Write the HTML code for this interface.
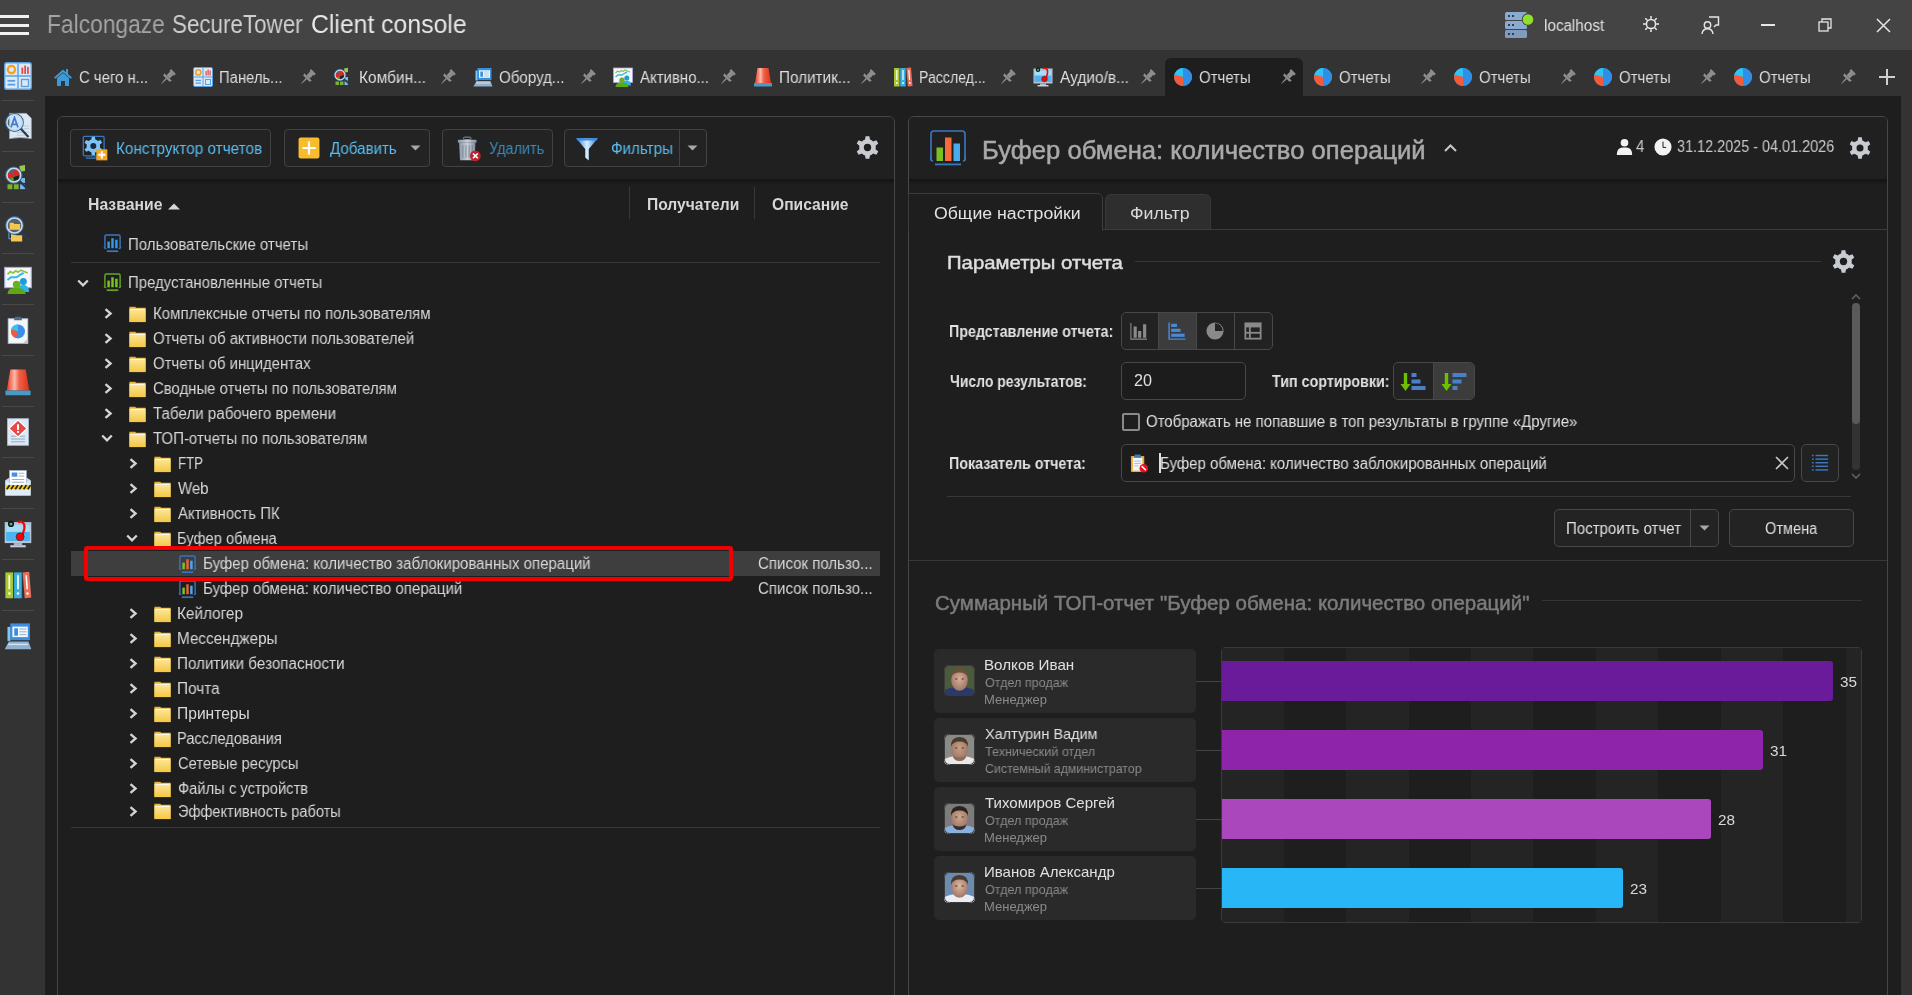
<!DOCTYPE html>
<html><head><meta charset="utf-8"><style>
html,body{margin:0;padding:0;}
body{width:1912px;height:995px;overflow:hidden;position:relative;background:#1e1e1e;font-family:"Liberation Sans",sans-serif;}
.a{position:absolute;}
.t{position:absolute;white-space:nowrap;line-height:1;will-change:transform;}
</style></head><body>
<div class="a" style="left:0px;top:0px;width:1912px;height:50px;background:#444444;"></div><div class="a" style="left:0px;top:50px;width:1912px;height:46px;background:#333333;"></div><div class="a" style="left:0px;top:96px;width:45px;height:899px;background:#333333;"></div><div class="a" style="left:1901px;top:96px;width:11px;height:899px;background:#333333;"></div><div class="a" style="left:45px;top:96px;width:1856px;height:899px;background:#1e1e1e;"></div><div class="a" style="left:0px;top:15px;width:29px;height:3px;background:#f2f2f2;"></div><div class="a" style="left:0px;top:24px;width:29px;height:3px;background:#f2f2f2;"></div><div class="a" style="left:0px;top:32px;width:29px;height:3px;background:#f2f2f2;"></div><div class="t" id="t_falcon" style="left:46.97px;top:12.44px;font-size:25px;color:#a4a4a4;transform:scaleX(0.9118);transform-origin:0 0;">Falcongaze</div><div class="t" id="t_secure" style="left:171.58px;top:12.44px;font-size:25px;color:#cfcfcf;transform:scaleX(0.8952);transform-origin:0 0;">SecureTower</div><div class="t" id="t_client" style="left:311.12px;top:12.44px;font-size:25px;color:#e8e8e8;transform:scaleX(0.9906);transform-origin:0 0;">Client console</div><svg class="a" style="left:1504px;top:11px;" width="32" height="28" viewBox="0 0 32 28">
<rect x="1" y="1" width="22" height="8" rx="1.5" fill="#8aaad0"/>
<rect x="1" y="10" width="22" height="8" rx="1.5" fill="#8aaad0"/>
<rect x="1" y="19" width="22" height="8" rx="1.5" fill="#7f9cc0"/>
<rect x="4" y="4" width="2" height="2" fill="#2d3e55"/><rect x="8" y="4" width="2" height="2" fill="#2d3e55"/>
<rect x="4" y="13" width="2" height="2" fill="#2d3e55"/><rect x="8" y="13" width="2" height="2" fill="#2d3e55"/>
<rect x="4" y="22" width="2" height="2" fill="#2d3e55"/><rect x="8" y="22" width="2" height="2" fill="#2d3e55"/>
<circle cx="24" cy="8.5" r="6.2" fill="#444"/><circle cx="24" cy="8.5" r="5.3" fill="#8ee02a"/>
</svg><div class="t" id="t_localhost" style="left:1543.78px;top:17.59px;font-size:15.6px;color:#e0e0e0;transform:scaleX(0.9770);transform-origin:0 0;">localhost</div><svg class="a" style="left:1642px;top:15px;" width="18" height="18" viewBox="0 0 18 18"><g fill="none" stroke="#ececec" stroke-width="1.5">
<circle cx="9" cy="9" r="4.6"/>
<path d="M9 1 V3.8 M9 14.2 V17 M1 9 H3.8 M14.2 9 H17 M3.3 3.3 L5.3 5.3 M12.7 12.7 L14.7 14.7 M3.3 14.7 L5.3 12.7 M12.7 5.3 L14.7 3.3"/></g></svg><svg class="a" style="left:1701px;top:16px;" width="19" height="19" viewBox="0 0 19 19"><g fill="none" stroke="#e6e6e6" stroke-width="1.4">
<path d="M8 1 H17.5 V9 H15 L13 11"/>
<circle cx="6.5" cy="9" r="3.2"/>
<path d="M1 18 C1.5 14 3.5 12.8 6.5 12.8 C9.5 12.8 11.5 14 12 18"/>
</g></svg><div class="a" style="left:1761px;top:24px;width:14px;height:1.5px;background:#e6e6e6;"></div><svg class="a" style="left:1818px;top:18px;" width="15.6" height="14" viewBox="0 0 15.6 14"><g fill="none" stroke="#e6e6e6" stroke-width="1.3"><rect x="1" y="4" width="9" height="9"/><path d="M4 4 V1 H13 V10 H10"/></g></svg><svg class="a" style="left:1876px;top:18px;" width="15" height="15" viewBox="0 0 15 15"><path d="M1 1 L14 14 M14 1 L1 14" stroke="#e6e6e6" stroke-width="1.5"/></svg><div class="a" style="left:1165px;top:58px;width:138px;height:38px;background:#1e1e1e;border-radius:6px 6px 0 0;"></div><svg class="a" style="left:53px;top:67px;" width="20" height="20" viewBox="0 0 20 20"><path d="M10 2.5 L1 10.5 L2.5 11.8 L10 5.2 L17.5 11.8 L19 10.5 L15 7 L15 2 L13 2 L13 5.2 Z" fill="#3d9ad6"/>
<path d="M4 11 L10 6 L16 11 L16 19 L12 19 L12 14 L8 14 L8 19 L4 19 Z" fill="#3d9ad6"/></svg><div class="t" style="left:79.19px;top:69.79px;font-size:15.6px;color:#dedede;transform:scaleX(0.9549);transform-origin:0 0;">С чего н...</div><svg class="a" style="left:159px;top:69px;" width="17" height="17" viewBox="0 0 20 20"><g transform="rotate(45 10 10)" fill="#8e8e8e">
<rect x="6" y="0" width="8" height="3" rx="0.8"/><rect x="7.3" y="2.5" width="5.4" height="6.5"/>
<path d="M3.8 9 H16.2 L15.2 12 H4.8 Z"/><path d="M9 12 H11 L10.3 20 H9.7 Z"/></g></svg><svg class="a" style="left:192.5px;top:67px;" width="20" height="20" viewBox="0 0 20 20"><rect x="0.5" y="0.5" width="19" height="19" rx="1.5" fill="#dbe9f8" stroke="#5aa0e0" stroke-width="1"/>
<path d="M10 1 V19 M1 10 H19" stroke="#5aa0e0" stroke-width="1"/>
<circle cx="5.3" cy="5.4" r="2.6" fill="none" stroke="#f5a020" stroke-width="1.6"/>
<rect x="12.5" y="4" width="1.2" height="4.5" fill="#e84040"/><rect x="14.5" y="2.5" width="1.2" height="6" fill="#e84040"/><rect x="16.5" y="3.5" width="1.2" height="5" fill="#e84040"/>
<rect x="2.5" y="12.8" width="5.5" height="1.3" fill="#5aa0e0"/><rect x="2.5" y="15.5" width="5.5" height="1.3" fill="#5aa0e0"/>
<rect x="12.5" y="12.5" width="5" height="5" fill="none" stroke="#5aa0e0" stroke-width="1"/></svg><div class="t" style="left:218.69px;top:69.79px;font-size:15.6px;color:#dedede;transform:scaleX(0.9486);transform-origin:0 0;">Панель...</div><svg class="a" style="left:299px;top:69px;" width="17" height="17" viewBox="0 0 20 20"><g transform="rotate(45 10 10)" fill="#8e8e8e">
<rect x="6" y="0" width="8" height="3" rx="0.8"/><rect x="7.3" y="2.5" width="5.4" height="6.5"/>
<path d="M3.8 9 H16.2 L15.2 12 H4.8 Z"/><path d="M9 12 H11 L10.3 20 H9.7 Z"/></g></svg><svg class="a" style="left:332.5px;top:67px;" width="20" height="20" viewBox="0 0 20 20"><rect x="2.5" y="14.5" width="3.5" height="3.5" fill="#7cb030"/><rect x="7" y="14.5" width="3.5" height="3.5" fill="#7cb030"/>
<path d="M11.5 14.5 H15 V18 H11.5 Z" fill="#78b8f0"/><rect x="11.5" y="10" width="3.5" height="3.5" fill="#78b8f0"/>
<path d="M11 1.5 L15 0.8 L15 5 L11.5 5.5 Z" fill="#98c850"/><circle cx="7" cy="8" r="5.8" fill="#b8d4ec" fill-opacity="0.3"/><path d="M2.5 7 L6 6 L6.5 9.5 L3 10.5 Z" fill="#e82020"/><path d="M7 5 L10 3.8 L10.8 7.5 L7.5 8.5 Z" fill="#e82020"/><path d="M6.5 9.5 L10.8 8 L11 11 L7 12 Z" fill="#202020"/><path d="M3 10.5 L6.5 9.5 L7 12 L4 12.5 Z" fill="#5a9a28"/>
<circle cx="7" cy="8" r="5.8" fill="none" stroke="#2a6aa0" stroke-width="0.8"/>
<circle cx="7" cy="8" r="4.8999999999999995" fill="none" stroke="#c8dcec" stroke-width="1.1"/>
<path d="M11.3 12.3 L17.5 18.5" stroke="#2a3a4a" stroke-width="1.6"/></svg><div class="t" style="left:358.62px;top:69.79px;font-size:15.6px;color:#dedede;transform:scaleX(0.9914);transform-origin:0 0;">Комбин...</div><svg class="a" style="left:439px;top:69px;" width="17" height="17" viewBox="0 0 20 20"><g transform="rotate(45 10 10)" fill="#8e8e8e">
<rect x="6" y="0" width="8" height="3" rx="0.8"/><rect x="7.3" y="2.5" width="5.4" height="6.5"/>
<path d="M3.8 9 H16.2 L15.2 12 H4.8 Z"/><path d="M9 12 H11 L10.3 20 H9.7 Z"/></g></svg><svg class="a" style="left:472.5px;top:67px;" width="20" height="20" viewBox="0 0 20 20"><rect x="4.5" y="1" width="14" height="12" fill="#3a8fe0"/><rect x="2.5" y="3.5" width="2" height="10" fill="#7ec8f8"/>
<rect x="6" y="3.3" width="11" height="7.5" fill="#f4f8fc"/><rect x="7.3" y="4.5" width="2.7" height="5.3" fill="#3a8fe0"/>
<rect x="11" y="4.6" width="5" height="0.8" fill="#9ab8cc"/><rect x="11" y="6.6" width="5" height="0.8" fill="#9ab8cc"/><rect x="11" y="8.6" width="5" height="0.8" fill="#9ab8cc"/>
<path d="M3.5 14 H17.5 L19.5 19.5 H0.5 Z" fill="#90b0d0"/><path d="M3 16 H17" stroke="#d8e4f0" stroke-width="1"/></svg><div class="t" style="left:499.22px;top:69.79px;font-size:15.6px;color:#dedede;transform:scaleX(0.9688);transform-origin:0 0;">Оборуд...</div><svg class="a" style="left:579px;top:69px;" width="17" height="17" viewBox="0 0 20 20"><g transform="rotate(45 10 10)" fill="#8e8e8e">
<rect x="6" y="0" width="8" height="3" rx="0.8"/><rect x="7.3" y="2.5" width="5.4" height="6.5"/>
<path d="M3.8 9 H16.2 L15.2 12 H4.8 Z"/><path d="M9 12 H11 L10.3 20 H9.7 Z"/></g></svg><svg class="a" style="left:612.5px;top:67px;" width="20" height="20" viewBox="0 0 20 20"><rect x="0.5" y="1" width="19" height="14.5" fill="#f6f6fc" stroke="#a8aad8" stroke-width="0.8"/>
<path d="M2.5 6 L4.5 4 L6.5 5 L8.5 3.5 L10 4.5 L12 3 L17 5" stroke="#8cc63f" stroke-width="1.2" fill="none"/>
<path d="M2.5 10 L5 8 L9 8 L12 6 L14 5" stroke="#39b8e8" stroke-width="1.4" fill="none"/>
<circle cx="13.8" cy="11" r="2.5" fill="#1a9ed8"/><path d="M9.5 18.5 C10 14.5 11.5 13.5 13.8 13.5 C16 13.5 17.5 14.5 18 18.5 Z" fill="#2ab4ec"/>
<circle cx="9" cy="13.2" r="2.7" fill="#68b020"/><path d="M2.5 20 C3 16 5.5 15.8 9 15.8 C12.5 15.8 14.5 16 15.5 20 Z" fill="#5ea818"/></svg><div class="t" style="left:639.66px;top:69.79px;font-size:15.6px;color:#dedede;transform:scaleX(0.9598);transform-origin:0 0;">Активно...</div><svg class="a" style="left:719px;top:69px;" width="17" height="17" viewBox="0 0 20 20"><g transform="rotate(45 10 10)" fill="#8e8e8e">
<rect x="6" y="0" width="8" height="3" rx="0.8"/><rect x="7.3" y="2.5" width="5.4" height="6.5"/>
<path d="M3.8 9 H16.2 L15.2 12 H4.8 Z"/><path d="M9 12 H11 L10.3 20 H9.7 Z"/></g></svg><svg class="a" style="left:752.5px;top:67px;" width="20" height="20" viewBox="0 0 20 20"><defs><linearGradient id="gal" x1="0" x2="1"><stop offset="0" stop-color="#e83a20"/><stop offset="0.35" stop-color="#ffb8a8"/><stop offset="0.55" stop-color="#f06048"/><stop offset="1" stop-color="#e03018"/></linearGradient></defs>
<path d="M4.5 1 H15.5 L18 16 H2 Z" fill="url(#gal)"/><rect x="1" y="16" width="18" height="3.5" rx="0.5" fill="#4a9ac8"/></svg><div class="t" style="left:778.65px;top:69.79px;font-size:15.6px;color:#dedede;transform:scaleX(0.9789);transform-origin:0 0;">Политик...</div><svg class="a" style="left:859px;top:69px;" width="17" height="17" viewBox="0 0 20 20"><g transform="rotate(45 10 10)" fill="#8e8e8e">
<rect x="6" y="0" width="8" height="3" rx="0.8"/><rect x="7.3" y="2.5" width="5.4" height="6.5"/>
<path d="M3.8 9 H16.2 L15.2 12 H4.8 Z"/><path d="M9 12 H11 L10.3 20 H9.7 Z"/></g></svg><svg class="a" style="left:892.5px;top:67px;" width="20" height="20" viewBox="0 0 20 20"><rect x="1" y="1" width="5.5" height="18.5" fill="#a8c830"/><rect x="7.2" y="1" width="5.5" height="18.5" fill="#39aee0"/>
<path d="M13.3 1 L18 0.5 L19.5 19 L14.8 19.5 Z" fill="#e8705a"/>
<rect x="3.2" y="3" width="1.2" height="10" fill="#fff"/><rect x="9.4" y="3" width="1.2" height="10" fill="#fff"/><path d="M15.3 3 L16.4 3 L17.1 13 L16 13 Z" fill="#fff"/>
<circle cx="3.8" cy="16" r="0.9" fill="#fff"/><circle cx="10" cy="16" r="0.9" fill="#fff"/><circle cx="16.8" cy="16" r="0.9" fill="#fff"/></svg><div class="t" style="left:918.73px;top:69.79px;font-size:15.6px;color:#dedede;transform:scaleX(0.9063);transform-origin:0 0;">Расслед...</div><svg class="a" style="left:999px;top:69px;" width="17" height="17" viewBox="0 0 20 20"><g transform="rotate(45 10 10)" fill="#8e8e8e">
<rect x="6" y="0" width="8" height="3" rx="0.8"/><rect x="7.3" y="2.5" width="5.4" height="6.5"/>
<path d="M3.8 9 H16.2 L15.2 12 H4.8 Z"/><path d="M9 12 H11 L10.3 20 H9.7 Z"/></g></svg><svg class="a" style="left:1032.5px;top:67px;" width="20" height="20" viewBox="0 0 20 20"><rect x="0.5" y="1.5" width="19" height="15" fill="#b8c4d4"/><rect x="1.5" y="3.5" width="17" height="11.5" fill="#4cb4ee"/>
<rect x="1.5" y="3.5" width="17" height="5" fill="#a8dcf8"/>
<rect x="7" y="16.5" width="6" height="1.5" fill="#b0b8cc"/><rect x="4.5" y="18" width="11" height="1.5" fill="#c8cce0"/>
<circle cx="5" cy="2.8" r="2.2" fill="#111"/><circle cx="5" cy="2.8" r="1.1" fill="#3cb878"/>
<path d="M10 1.5 C13 0.5 15 2 14.5 6 L13 12" stroke="#f00" stroke-width="1.6" fill="none"/>
<circle cx="11.5" cy="12" r="2.8" fill="#f00" stroke="#333" stroke-width="0.6"/></svg><div class="t" style="left:1059.66px;top:69.79px;font-size:15.6px;color:#dedede;transform:scaleX(0.9912);transform-origin:0 0;">Аудио/в...</div><svg class="a" style="left:1139px;top:69px;" width="17" height="17" viewBox="0 0 20 20"><g transform="rotate(45 10 10)" fill="#8e8e8e">
<rect x="6" y="0" width="8" height="3" rx="0.8"/><rect x="7.3" y="2.5" width="5.4" height="6.5"/>
<path d="M3.8 9 H16.2 L15.2 12 H4.8 Z"/><path d="M9 12 H11 L10.3 20 H9.7 Z"/></g></svg><svg class="a" style="left:1173px;top:67px;" width="20" height="20" viewBox="0 0 20 20"><circle cx="10" cy="10" r="9" fill="#36a4f0"/><path d="M10 10 L10 1 A9 9 0 0 0 1.3 7.8 Z" fill="#2ec4f6"/>
<path d="M10 10 L1.3 7.8 A9 9 0 0 0 10 19 Z" fill="#f25a3a"/>
<path d="M10 1 A9 9 0 0 1 10 19 Z" fill="#2f8fe6"/></svg><div class="t" style="left:1199.23px;top:69.79px;font-size:15.6px;color:#dedede;transform:scaleX(0.9583);transform-origin:0 0;">Отчеты</div><svg class="a" style="left:1279px;top:69px;" width="17" height="17" viewBox="0 0 20 20"><g transform="rotate(45 10 10)" fill="#8e8e8e">
<rect x="6" y="0" width="8" height="3" rx="0.8"/><rect x="7.3" y="2.5" width="5.4" height="6.5"/>
<path d="M3.8 9 H16.2 L15.2 12 H4.8 Z"/><path d="M9 12 H11 L10.3 20 H9.7 Z"/></g></svg><svg class="a" style="left:1313px;top:67px;" width="20" height="20" viewBox="0 0 20 20"><circle cx="10" cy="10" r="9" fill="#36a4f0"/><path d="M10 10 L10 1 A9 9 0 0 0 1.3 7.8 Z" fill="#2ec4f6"/>
<path d="M10 10 L1.3 7.8 A9 9 0 0 0 10 19 Z" fill="#f25a3a"/>
<path d="M10 1 A9 9 0 0 1 10 19 Z" fill="#2f8fe6"/></svg><div class="t" style="left:1339.23px;top:69.79px;font-size:15.6px;color:#dedede;transform:scaleX(0.9583);transform-origin:0 0;">Отчеты</div><svg class="a" style="left:1419px;top:69px;" width="17" height="17" viewBox="0 0 20 20"><g transform="rotate(45 10 10)" fill="#8e8e8e">
<rect x="6" y="0" width="8" height="3" rx="0.8"/><rect x="7.3" y="2.5" width="5.4" height="6.5"/>
<path d="M3.8 9 H16.2 L15.2 12 H4.8 Z"/><path d="M9 12 H11 L10.3 20 H9.7 Z"/></g></svg><svg class="a" style="left:1453px;top:67px;" width="20" height="20" viewBox="0 0 20 20"><circle cx="10" cy="10" r="9" fill="#36a4f0"/><path d="M10 10 L10 1 A9 9 0 0 0 1.3 7.8 Z" fill="#2ec4f6"/>
<path d="M10 10 L1.3 7.8 A9 9 0 0 0 10 19 Z" fill="#f25a3a"/>
<path d="M10 1 A9 9 0 0 1 10 19 Z" fill="#2f8fe6"/></svg><div class="t" style="left:1479.23px;top:69.79px;font-size:15.6px;color:#dedede;transform:scaleX(0.9583);transform-origin:0 0;">Отчеты</div><svg class="a" style="left:1559px;top:69px;" width="17" height="17" viewBox="0 0 20 20"><g transform="rotate(45 10 10)" fill="#8e8e8e">
<rect x="6" y="0" width="8" height="3" rx="0.8"/><rect x="7.3" y="2.5" width="5.4" height="6.5"/>
<path d="M3.8 9 H16.2 L15.2 12 H4.8 Z"/><path d="M9 12 H11 L10.3 20 H9.7 Z"/></g></svg><svg class="a" style="left:1593px;top:67px;" width="20" height="20" viewBox="0 0 20 20"><circle cx="10" cy="10" r="9" fill="#36a4f0"/><path d="M10 10 L10 1 A9 9 0 0 0 1.3 7.8 Z" fill="#2ec4f6"/>
<path d="M10 10 L1.3 7.8 A9 9 0 0 0 10 19 Z" fill="#f25a3a"/>
<path d="M10 1 A9 9 0 0 1 10 19 Z" fill="#2f8fe6"/></svg><div class="t" style="left:1619.23px;top:69.79px;font-size:15.6px;color:#dedede;transform:scaleX(0.9583);transform-origin:0 0;">Отчеты</div><svg class="a" style="left:1699px;top:69px;" width="17" height="17" viewBox="0 0 20 20"><g transform="rotate(45 10 10)" fill="#8e8e8e">
<rect x="6" y="0" width="8" height="3" rx="0.8"/><rect x="7.3" y="2.5" width="5.4" height="6.5"/>
<path d="M3.8 9 H16.2 L15.2 12 H4.8 Z"/><path d="M9 12 H11 L10.3 20 H9.7 Z"/></g></svg><svg class="a" style="left:1733px;top:67px;" width="20" height="20" viewBox="0 0 20 20"><circle cx="10" cy="10" r="9" fill="#36a4f0"/><path d="M10 10 L10 1 A9 9 0 0 0 1.3 7.8 Z" fill="#2ec4f6"/>
<path d="M10 10 L1.3 7.8 A9 9 0 0 0 10 19 Z" fill="#f25a3a"/>
<path d="M10 1 A9 9 0 0 1 10 19 Z" fill="#2f8fe6"/></svg><div class="t" style="left:1759.23px;top:69.79px;font-size:15.6px;color:#dedede;transform:scaleX(0.9583);transform-origin:0 0;">Отчеты</div><svg class="a" style="left:1839px;top:69px;" width="17" height="17" viewBox="0 0 20 20"><g transform="rotate(45 10 10)" fill="#8e8e8e">
<rect x="6" y="0" width="8" height="3" rx="0.8"/><rect x="7.3" y="2.5" width="5.4" height="6.5"/>
<path d="M3.8 9 H16.2 L15.2 12 H4.8 Z"/><path d="M9 12 H11 L10.3 20 H9.7 Z"/></g></svg><div class="a" style="left:1879px;top:76px;width:16px;height:2px;background:#cfcfcf;"></div><div class="a" style="left:1886px;top:69px;width:2px;height:16px;background:#cfcfcf;"></div><div class="a" style="left:2px;top:100px;width:32px;height:1px;background:#484848;"></div><div class="a" style="left:2px;top:151px;width:32px;height:1px;background:#484848;"></div><div class="a" style="left:2px;top:202px;width:32px;height:1px;background:#484848;"></div><div class="a" style="left:2px;top:253px;width:32px;height:1px;background:#484848;"></div><div class="a" style="left:2px;top:304px;width:32px;height:1px;background:#484848;"></div><div class="a" style="left:2px;top:355px;width:32px;height:1px;background:#484848;"></div><div class="a" style="left:2px;top:406px;width:32px;height:1px;background:#484848;"></div><div class="a" style="left:2px;top:457px;width:32px;height:1px;background:#484848;"></div><div class="a" style="left:2px;top:508px;width:32px;height:1px;background:#484848;"></div><div class="a" style="left:2px;top:559px;width:32px;height:1px;background:#484848;"></div><div class="a" style="left:2px;top:610px;width:32px;height:1px;background:#484848;"></div><svg class="a" style="left:4px;top:62px;" width="28" height="28" viewBox="0 0 20 20"><rect x="0.5" y="0.5" width="19" height="19" rx="1.5" fill="#dbe9f8" stroke="#5aa0e0" stroke-width="1"/>
<path d="M10 1 V19 M1 10 H19" stroke="#5aa0e0" stroke-width="1"/>
<circle cx="5.3" cy="5.4" r="2.6" fill="none" stroke="#f5a020" stroke-width="1.6"/>
<rect x="12.5" y="4" width="1.2" height="4.5" fill="#e84040"/><rect x="14.5" y="2.5" width="1.2" height="6" fill="#e84040"/><rect x="16.5" y="3.5" width="1.2" height="5" fill="#e84040"/>
<rect x="2.5" y="12.8" width="5.5" height="1.3" fill="#5aa0e0"/><rect x="2.5" y="15.5" width="5.5" height="1.3" fill="#5aa0e0"/>
<rect x="12.5" y="12.5" width="5" height="5" fill="none" stroke="#5aa0e0" stroke-width="1"/></svg><svg class="a" style="left:4px;top:112px;" width="28" height="28" viewBox="0 0 20 20"><path d="M4 1 H16 L19.5 4.5 V19 Q11.5 17.5 4 19 Z" fill="#dde8f2" stroke="#a8bccc" stroke-width="0.5"/>
<path d="M13 10 H18 M13 12 H18 M9 14.5 H18 M9 16.5 H17" stroke="#b8c8d8" stroke-width="0.7"/><circle cx="7.5" cy="7.5" r="6.3" fill="#b8d4ec" fill-opacity="0.3"/><path d="M5 11 L7.5 4 L10 11 M6 8.8 H9" stroke="#3a80d8" stroke-width="1.2" fill="none"/>
<circle cx="7.5" cy="7.5" r="6.3" fill="none" stroke="#2a6aa0" stroke-width="0.8"/>
<circle cx="7.5" cy="7.5" r="5.3999999999999995" fill="none" stroke="#c8dcec" stroke-width="1.1"/>
<path d="M12 12 L17.5 17.8" stroke="#2a3a4a" stroke-width="1.6"/></svg><svg class="a" style="left:4px;top:164px;" width="28" height="28" viewBox="0 0 20 20"><rect x="2.5" y="14.5" width="3.5" height="3.5" fill="#7cb030"/><rect x="7" y="14.5" width="3.5" height="3.5" fill="#7cb030"/>
<path d="M11.5 14.5 H15 V18 H11.5 Z" fill="#78b8f0"/><rect x="11.5" y="10" width="3.5" height="3.5" fill="#78b8f0"/>
<path d="M11 1.5 L15 0.8 L15 5 L11.5 5.5 Z" fill="#98c850"/><circle cx="7" cy="8" r="5.8" fill="#b8d4ec" fill-opacity="0.3"/><path d="M2.5 7 L6 6 L6.5 9.5 L3 10.5 Z" fill="#e82020"/><path d="M7 5 L10 3.8 L10.8 7.5 L7.5 8.5 Z" fill="#e82020"/><path d="M6.5 9.5 L10.8 8 L11 11 L7 12 Z" fill="#202020"/><path d="M3 10.5 L6.5 9.5 L7 12 L4 12.5 Z" fill="#5a9a28"/>
<circle cx="7" cy="8" r="5.8" fill="none" stroke="#2a6aa0" stroke-width="0.8"/>
<circle cx="7" cy="8" r="4.8999999999999995" fill="none" stroke="#c8dcec" stroke-width="1.1"/>
<path d="M11.3 12.3 L17.5 18.5" stroke="#2a3a4a" stroke-width="1.6"/></svg><svg class="a" style="left:4px;top:215px;" width="28" height="28" viewBox="0 0 20 20"><path d="M3.5 10 V17 H8" fill="none" stroke="#6aa8e0" stroke-width="0.7"/>
<path d="M5 13.5 H7.5 L8.5 14.5 H13 V19 H5 Z" fill="#f2c850"/><circle cx="7.5" cy="7.5" r="6.3" fill="#b8d4ec" fill-opacity="0.3"/><path d="M4 5.5 H6.5 L7.5 6.5 H11.5 V10.5 H4 Z" fill="#f2c850"/>
<circle cx="7.5" cy="7.5" r="6.3" fill="none" stroke="#2a6aa0" stroke-width="0.8"/>
<circle cx="7.5" cy="7.5" r="5.3999999999999995" fill="none" stroke="#c8dcec" stroke-width="1.1"/>
<path d="M12 12 L18 18.3" stroke="#2a3a4a" stroke-width="1.6"/></svg><svg class="a" style="left:4px;top:266px;" width="28" height="28" viewBox="0 0 20 20"><rect x="0.5" y="1" width="19" height="14.5" fill="#f6f6fc" stroke="#a8aad8" stroke-width="0.8"/>
<path d="M2.5 6 L4.5 4 L6.5 5 L8.5 3.5 L10 4.5 L12 3 L17 5" stroke="#8cc63f" stroke-width="1.2" fill="none"/>
<path d="M2.5 10 L5 8 L9 8 L12 6 L14 5" stroke="#39b8e8" stroke-width="1.4" fill="none"/>
<circle cx="13.8" cy="11" r="2.5" fill="#1a9ed8"/><path d="M9.5 18.5 C10 14.5 11.5 13.5 13.8 13.5 C16 13.5 17.5 14.5 18 18.5 Z" fill="#2ab4ec"/>
<circle cx="9" cy="13.2" r="2.7" fill="#68b020"/><path d="M2.5 20 C3 16 5.5 15.8 9 15.8 C12.5 15.8 14.5 16 15.5 20 Z" fill="#5ea818"/></svg><svg class="a" style="left:4px;top:316px;" width="28" height="28" viewBox="0 0 20 20"><rect x="3" y="2" width="14" height="17.5" fill="#f4f6fa" stroke="#b8c8d8" stroke-width="0.6"/>
<path d="M8 0.5 H12 L13 3 H7 Z" fill="#4a6a88"/><path d="M13.5 19.5 L17 16 V19.5 Z" fill="#c0c8d0"/>
<circle cx="10" cy="11" r="5" fill="#3a90e8"/><path d="M10 11 L10 6 A5 5 0 0 0 5.2 9.6 Z" fill="#3ac0f0"/><path d="M10 11 L5.2 9.6 A5 5 0 0 0 8.5 15.8 Z" fill="#f05a3a"/></svg><svg class="a" style="left:4px;top:368px;" width="28" height="28" viewBox="0 0 20 20"><defs><linearGradient id="gal" x1="0" x2="1"><stop offset="0" stop-color="#e83a20"/><stop offset="0.35" stop-color="#ffb8a8"/><stop offset="0.55" stop-color="#f06048"/><stop offset="1" stop-color="#e03018"/></linearGradient></defs>
<path d="M4.5 1 H15.5 L18 16 H2 Z" fill="url(#gal)"/><rect x="1" y="16" width="18" height="3.5" rx="0.5" fill="#4a9ac8"/></svg><svg class="a" style="left:4px;top:418px;" width="28" height="28" viewBox="0 0 20 20"><rect x="2.5" y="0.5" width="15" height="19" fill="#dce8f4" stroke="#a8bcd0" stroke-width="0.6"/>
<path d="M5 13 H15 M5 15 H15 M5 17 H15" stroke="#90a8c0" stroke-width="0.7"/>
<path d="M10 1.5 L16.5 7.5 L10 13.5 L3.5 7.5 Z" fill="#e84848" stroke="#fff" stroke-width="0.8"/>
<rect x="9.3" y="4.5" width="1.4" height="4" fill="#fff"/><rect x="9.3" y="9.3" width="1.4" height="1.4" fill="#fff"/></svg><svg class="a" style="left:4px;top:469px;" width="28" height="28" viewBox="0 0 20 20"><path d="M1 8 L10 2 L19 8 V19 H1 Z" fill="#c8dcf0"/>
<rect x="4" y="1" width="12" height="11" fill="#fff" stroke="#9ab0c8" stroke-width="0.5"/>
<rect x="5.5" y="2.5" width="4" height="3" fill="#4a8ee0"/><path d="M10.5 3 H14.5 M10.5 5 H14.5 M5.5 7.5 H14.5 M5.5 9.5 H14.5" stroke="#9ab0c8" stroke-width="0.8"/>
<path d="M1 8 L10 14 L19 8 V19 H1 Z" fill="#e0ecf8"/>
<rect x="1" y="11.5" width="18" height="3" fill="#f2c814"/>
<path d="M2 14.5 L4 11.5 M5 14.5 L7 11.5 M8 14.5 L10 11.5 M11 14.5 L13 11.5 M14 14.5 L16 11.5 M17 14.5 L19 11.5" stroke="#222" stroke-width="1.2"/></svg><svg class="a" style="left:4px;top:520px;" width="28" height="28" viewBox="0 0 20 20"><rect x="0.5" y="1.5" width="19" height="15" fill="#b8c4d4"/><rect x="1.5" y="3.5" width="17" height="11.5" fill="#4cb4ee"/>
<rect x="1.5" y="3.5" width="17" height="5" fill="#a8dcf8"/>
<rect x="7" y="16.5" width="6" height="1.5" fill="#b0b8cc"/><rect x="4.5" y="18" width="11" height="1.5" fill="#c8cce0"/>
<circle cx="5" cy="2.8" r="2.2" fill="#111"/><circle cx="5" cy="2.8" r="1.1" fill="#3cb878"/>
<path d="M10 1.5 C13 0.5 15 2 14.5 6 L13 12" stroke="#f00" stroke-width="1.6" fill="none"/>
<circle cx="11.5" cy="12" r="2.8" fill="#f00" stroke="#333" stroke-width="0.6"/></svg><svg class="a" style="left:4px;top:571px;" width="28" height="28" viewBox="0 0 20 20"><rect x="1" y="1" width="5.5" height="18.5" fill="#a8c830"/><rect x="7.2" y="1" width="5.5" height="18.5" fill="#39aee0"/>
<path d="M13.3 1 L18 0.5 L19.5 19 L14.8 19.5 Z" fill="#e8705a"/>
<rect x="3.2" y="3" width="1.2" height="10" fill="#fff"/><rect x="9.4" y="3" width="1.2" height="10" fill="#fff"/><path d="M15.3 3 L16.4 3 L17.1 13 L16 13 Z" fill="#fff"/>
<circle cx="3.8" cy="16" r="0.9" fill="#fff"/><circle cx="10" cy="16" r="0.9" fill="#fff"/><circle cx="16.8" cy="16" r="0.9" fill="#fff"/></svg><svg class="a" style="left:4px;top:622px;" width="28" height="28" viewBox="0 0 20 20"><rect x="4.5" y="1" width="14" height="12" fill="#3a8fe0"/><rect x="2.5" y="3.5" width="2" height="10" fill="#7ec8f8"/>
<rect x="6" y="3.3" width="11" height="7.5" fill="#f4f8fc"/><rect x="7.3" y="4.5" width="2.7" height="5.3" fill="#3a8fe0"/>
<rect x="11" y="4.6" width="5" height="0.8" fill="#9ab8cc"/><rect x="11" y="6.6" width="5" height="0.8" fill="#9ab8cc"/><rect x="11" y="8.6" width="5" height="0.8" fill="#9ab8cc"/>
<path d="M3.5 14 H17.5 L19.5 19.5 H0.5 Z" fill="#90b0d0"/><path d="M3 16 H17" stroke="#d8e4f0" stroke-width="1"/></svg><div class="a" style="left:57px;top:116px;width:838px;height:894px;background:#1e1e1e;border:1px solid #474747;box-sizing:border-box;border-radius:6px;"></div><div class="a" style="left:58px;top:117px;width:836px;height:62px;background:#202020;border-radius:5px 5px 0 0;"></div><div class="a" style="left:58px;top:179px;width:836px;height:6px;background:linear-gradient(#131313,rgba(30,30,30,0));"></div><div class="a" style="left:70px;top:129px;width:201px;height:38px;background:#232323;border:1px solid #424242;box-sizing:border-box;border-radius:4px;"></div><div class="a" style="left:284px;top:129px;width:146px;height:38px;background:#232323;border:1px solid #424242;box-sizing:border-box;border-radius:4px;"></div><div class="a" style="left:442px;top:129px;width:111px;height:38px;background:#232323;border:1px solid #424242;box-sizing:border-box;border-radius:4px;"></div><div class="a" style="left:564px;top:129px;width:143px;height:38px;background:#232323;border:1px solid #424242;box-sizing:border-box;border-radius:4px;"></div><div class="a" style="left:679px;top:130px;width:1px;height:36px;background:#424242;"></div><svg class="a" style="left:81px;top:135px;" width="28" height="26" viewBox="0 0 20 20"><rect x="1" y="1" width="16" height="15" rx="1" fill="none" stroke="#3a78c0" stroke-width="1"/>
<rect x="3" y="17.3" width="10" height="1" fill="#3a78c0"/><g transform="translate(1.5 1.2) scale(0.72)"><polygon points="7.87,3.12 8.36,0.14 11.64,0.14 12.13,3.12 13.60,3.76 14.89,4.72 17.72,3.65 19.36,6.49 17.02,8.40 17.20,10.00 17.02,11.60 19.36,13.51 17.72,16.35 14.89,15.28 13.60,16.24 12.13,16.88 11.64,19.86 8.36,19.86 7.87,16.88 6.40,16.24 5.11,15.28 2.28,16.35 0.64,13.51 2.98,11.60 2.80,10.00 2.98,8.40 0.64,6.49 2.28,3.65 5.11,4.72 6.40,3.76" fill="#7cc4f8"/><circle cx="10" cy="10" r="3.2" fill="#1e2a3a"/></g>
<rect x="11" y="11" width="8.5" height="8.5" fill="#f5a623"/><path d="M15.25 12.5 V18 M12.5 15.25 H18" stroke="#fff" stroke-width="1.6"/></svg><div class="t" style="left:115.63px;top:141.19px;font-size:15.6px;color:#58bdf0;transform:scaleX(0.9811);transform-origin:0 0;">Конструктор отчетов</div><svg class="a" style="left:298px;top:137px;" width="22" height="22" viewBox="0 0 20 20"><rect x="0.5" y="0.5" width="19" height="19" rx="2" fill="#f8bc2c"/><path d="M10 4 V16 M4 10 H16" stroke="#fff" stroke-width="2"/></svg><div class="t" style="left:330.45px;top:141.19px;font-size:15.6px;color:#58bdf0;transform:scaleX(0.9677);transform-origin:0 0;">Добавить</div><svg class="a" style="left:410px;top:145px;" width="11" height="6" viewBox="0 0 11 6"><path d="M0.5 0.5 H10.5 L5.5 5.5 Z" fill="#a8a8a8"/></svg><svg class="a" style="left:456px;top:136px;" width="25" height="26" viewBox="0 0 20 20"><defs><linearGradient id="gtr" x1="0" x2="1"><stop offset="0" stop-color="#8a98a8"/><stop offset="0.5" stop-color="#c8d0d8"/><stop offset="1" stop-color="#8090a0"/></linearGradient></defs>
<rect x="6" y="0.5" width="6" height="2" rx="0.8" fill="none" stroke="#7890a8" stroke-width="0.8"/>
<rect x="1.5" y="2.5" width="15" height="2.5" rx="0.8" fill="url(#gtr)"/><path d="M2.5 5 H15.5 L14.8 19 H3.2 Z" fill="url(#gtr)"/>
<path d="M5.5 7 V17 M8 7 V17 M10.5 7 V17 M13 7 V17" stroke="#6a7888" stroke-width="0.6"/>
<circle cx="15.5" cy="15.5" r="4.3" fill="#c0202a"/><path d="M13.6 13.6 L17.4 17.4 M17.4 13.6 L13.6 17.4" stroke="#fff" stroke-width="1.4"/></svg><div class="t" style="left:488.61px;top:141.19px;font-size:15.6px;color:#3a8ab8;transform:scaleX(0.9266);transform-origin:0 0;">Удалить</div><svg class="a" style="left:575px;top:136px;" width="24" height="26" viewBox="0 0 20 20"><defs><linearGradient id="gfu" x1="0" x2="1"><stop offset="0" stop-color="#2a7ad8"/><stop offset="0.5" stop-color="#d8f0ff"/><stop offset="1" stop-color="#2a7ad8"/></linearGradient></defs>
<path d="M1 1 H19 L11.5 10 V19.5 L8.5 17 V10 Z" fill="url(#gfu)"/><path d="M1 1 H19 L18 3 H2 Z" fill="#3a8ae8"/></svg><div class="t" style="left:610.84px;top:141.19px;font-size:15.6px;color:#58bdf0;transform:scaleX(0.9731);transform-origin:0 0;">Фильтры</div><svg class="a" style="left:687px;top:145px;" width="11" height="6" viewBox="0 0 11 6"><path d="M0.5 0.5 H10.5 L5.5 5.5 Z" fill="#a8a8a8"/></svg><svg class="a" style="left:856px;top:136px;" width="23" height="23" viewBox="0 0 20 20"><polygon points="7.87,3.12 8.36,0.14 11.64,0.14 12.13,3.12 13.60,3.76 14.89,4.72 17.72,3.65 19.36,6.49 17.02,8.40 17.20,10.00 17.02,11.60 19.36,13.51 17.72,16.35 14.89,15.28 13.60,16.24 12.13,16.88 11.64,19.86 8.36,19.86 7.87,16.88 6.40,16.24 5.11,15.28 2.28,16.35 0.64,13.51 2.98,11.60 2.80,10.00 2.98,8.40 0.64,6.49 2.28,3.65 5.11,4.72 6.40,3.76" fill="#c8ccd2"/><circle cx="10" cy="10" r="3.2" fill="#1e1e1e"/></svg><div class="t" style="left:87.77px;top:196.89px;font-size:15.6px;color:#d6d6d6;font-weight:700;transform:scaleX(1.0112);transform-origin:0 0;">Название</div><svg class="a" style="left:168px;top:203px;" width="12" height="7" viewBox="0 0 12 7"><path d="M0 6.5 L6 0.5 L12 6.5 Z" fill="#d6d6d6"/></svg><div class="a" style="left:629px;top:187px;width:1px;height:32px;background:#383838;"></div><div class="a" style="left:754px;top:187px;width:1px;height:32px;background:#383838;"></div><div class="t" style="left:647.18px;top:196.99px;font-size:15.6px;color:#d6d6d6;font-weight:700;transform:scaleX(0.9967);transform-origin:0 0;">Получатели</div><div class="t" style="left:772.27px;top:196.99px;font-size:15.6px;color:#d6d6d6;font-weight:700;transform:scaleX(1.0007);transform-origin:0 0;">Описание</div><svg class="a" style="left:102.5px;top:234px;" width="19" height="19" viewBox="0 0 20 20"><path d="M2 14.5 V2.5 Q2 1 3.5 1 H16.5 Q18 1 18 2.5 V14.5" fill="none" stroke="#3a78c0" stroke-width="1.5"/>
<path d="M1.2 13.5 Q1.5 15.5 3.5 15.5 M18.8 13.5 Q18.5 15.5 16.5 15.5" fill="none" stroke="#3a78c0" stroke-width="1.3"/>
<rect x="4" y="17.2" width="12" height="1.8" fill="#3a78c0"/>
<rect x="4.6" y="8" width="2.6" height="7" fill="#2f9af0"/><rect x="8.7" y="4.5" width="2.6" height="10.5" fill="#2f9af0"/><rect x="12.8" y="6" width="2.6" height="9" fill="#2f9af0"/></svg><div class="t" style="left:127.98px;top:236.69px;font-size:15.6px;color:#d8d8d8;transform:scaleX(0.9597);transform-origin:0 0;">Пользовательские отчеты</div><div class="a" style="left:71px;top:262px;width:809px;height:1px;background:#383838;"></div><svg class="a" style="left:77px;top:278.5px;" width="12" height="9" viewBox="0 0 12 9"><path d="M1.2 1.5 L6 6.3 L10.8 1.5" fill="none" stroke="#d4d4d4" stroke-width="2.3"/></svg><svg class="a" style="left:102.5px;top:273px;" width="19" height="19" viewBox="0 0 20 20"><path d="M2 14.5 V2.5 Q2 1 3.5 1 H16.5 Q18 1 18 2.5 V14.5" fill="none" stroke="#62a820" stroke-width="1.5"/>
<path d="M1.2 13.5 Q1.5 15.5 3.5 15.5 M18.8 13.5 Q18.5 15.5 16.5 15.5" fill="none" stroke="#62a820" stroke-width="1.3"/>
<rect x="4" y="17.2" width="12" height="1.8" fill="#62a820"/>
<rect x="4.6" y="8" width="2.6" height="7" fill="#7cc420"/><rect x="8.7" y="4.5" width="2.6" height="10.5" fill="#7cc420"/><rect x="12.8" y="6" width="2.6" height="9" fill="#7cc420"/></svg><div class="t" style="left:127.98px;top:275.49px;font-size:15.6px;color:#d8d8d8;transform:scaleX(0.9571);transform-origin:0 0;">Предустановленные отчеты</div><div class="a" style="left:71px;top:551px;width:809px;height:25px;background:#3e3e3e;"></div><svg class="a" style="left:104.1px;top:308.0px;" width="9" height="11" viewBox="0 0 9 11"><path d="M1.5 1.2 L6.6 5.5 L1.5 9.8" fill="none" stroke="#d4d4d4" stroke-width="2.3"/></svg><svg class="a" style="left:127.5px;top:304.5px;" width="19" height="18" viewBox="0 0 20 20"><defs><linearGradient id="gfo" x1="0" y1="0" x2="0" y2="1"><stop offset="0" stop-color="#fbe7a0"/><stop offset="1" stop-color="#f5c842"/></linearGradient></defs>
<path d="M1 2 H7.5 L8.5 3 H19 V19 H1 Z" fill="#e8b030"/><rect x="1" y="4" width="18" height="15" fill="url(#gfo)"/><rect x="2.5" y="4.6" width="15" height="0.8" fill="#fff"/></svg><div class="t" style="left:152.56px;top:305.79px;font-size:15.6px;color:#d8d8d8;transform:scaleX(0.9648);transform-origin:0 0;">Комплексные отчеты по пользователям</div><svg class="a" style="left:104.1px;top:333.0px;" width="9" height="11" viewBox="0 0 9 11"><path d="M1.5 1.2 L6.6 5.5 L1.5 9.8" fill="none" stroke="#d4d4d4" stroke-width="2.3"/></svg><svg class="a" style="left:127.5px;top:329.5px;" width="19" height="18" viewBox="0 0 20 20"><defs><linearGradient id="gfo" x1="0" y1="0" x2="0" y2="1"><stop offset="0" stop-color="#fbe7a0"/><stop offset="1" stop-color="#f5c842"/></linearGradient></defs>
<path d="M1 2 H7.5 L8.5 3 H19 V19 H1 Z" fill="#e8b030"/><rect x="1" y="4" width="18" height="15" fill="url(#gfo)"/><rect x="2.5" y="4.6" width="15" height="0.8" fill="#fff"/></svg><div class="t" style="left:153.13px;top:330.79px;font-size:15.6px;color:#d8d8d8;transform:scaleX(0.9569);transform-origin:0 0;">Отчеты об активности пользователей</div><svg class="a" style="left:104.1px;top:358.0px;" width="9" height="11" viewBox="0 0 9 11"><path d="M1.5 1.2 L6.6 5.5 L1.5 9.8" fill="none" stroke="#d4d4d4" stroke-width="2.3"/></svg><svg class="a" style="left:127.5px;top:354.5px;" width="19" height="18" viewBox="0 0 20 20"><defs><linearGradient id="gfo" x1="0" y1="0" x2="0" y2="1"><stop offset="0" stop-color="#fbe7a0"/><stop offset="1" stop-color="#f5c842"/></linearGradient></defs>
<path d="M1 2 H7.5 L8.5 3 H19 V19 H1 Z" fill="#e8b030"/><rect x="1" y="4" width="18" height="15" fill="url(#gfo)"/><rect x="2.5" y="4.6" width="15" height="0.8" fill="#fff"/></svg><div class="t" style="left:153.13px;top:355.79px;font-size:15.6px;color:#d8d8d8;transform:scaleX(0.9549);transform-origin:0 0;">Отчеты об инцидентах</div><svg class="a" style="left:104.1px;top:383.0px;" width="9" height="11" viewBox="0 0 9 11"><path d="M1.5 1.2 L6.6 5.5 L1.5 9.8" fill="none" stroke="#d4d4d4" stroke-width="2.3"/></svg><svg class="a" style="left:127.5px;top:379.5px;" width="19" height="18" viewBox="0 0 20 20"><defs><linearGradient id="gfo" x1="0" y1="0" x2="0" y2="1"><stop offset="0" stop-color="#fbe7a0"/><stop offset="1" stop-color="#f5c842"/></linearGradient></defs>
<path d="M1 2 H7.5 L8.5 3 H19 V19 H1 Z" fill="#e8b030"/><rect x="1" y="4" width="18" height="15" fill="url(#gfo)"/><rect x="2.5" y="4.6" width="15" height="0.8" fill="#fff"/></svg><div class="t" style="left:153.09px;top:380.79px;font-size:15.6px;color:#d8d8d8;transform:scaleX(0.9567);transform-origin:0 0;">Сводные отчеты по пользователям</div><svg class="a" style="left:104.1px;top:408.0px;" width="9" height="11" viewBox="0 0 9 11"><path d="M1.5 1.2 L6.6 5.5 L1.5 9.8" fill="none" stroke="#d4d4d4" stroke-width="2.3"/></svg><svg class="a" style="left:127.5px;top:404.5px;" width="19" height="18" viewBox="0 0 20 20"><defs><linearGradient id="gfo" x1="0" y1="0" x2="0" y2="1"><stop offset="0" stop-color="#fbe7a0"/><stop offset="1" stop-color="#f5c842"/></linearGradient></defs>
<path d="M1 2 H7.5 L8.5 3 H19 V19 H1 Z" fill="#e8b030"/><rect x="1" y="4" width="18" height="15" fill="url(#gfo)"/><rect x="2.5" y="4.6" width="15" height="0.8" fill="#fff"/></svg><div class="t" style="left:153.48px;top:405.79px;font-size:15.6px;color:#d8d8d8;transform:scaleX(0.9701);transform-origin:0 0;">Табели рабочего времени</div><svg class="a" style="left:101.1px;top:434.0px;" width="12" height="9" viewBox="0 0 12 9"><path d="M1.2 1.5 L6 6.3 L10.8 1.5" fill="none" stroke="#d4d4d4" stroke-width="2.3"/></svg><svg class="a" style="left:127.5px;top:429.5px;" width="19" height="18" viewBox="0 0 20 20"><defs><linearGradient id="gfo" x1="0" y1="0" x2="0" y2="1"><stop offset="0" stop-color="#fbe7a0"/><stop offset="1" stop-color="#f5c842"/></linearGradient></defs>
<path d="M1 2 H7.5 L8.5 3 H19 V19 H1 Z" fill="#e8b030"/><rect x="1" y="4" width="18" height="15" fill="url(#gfo)"/><rect x="2.5" y="4.6" width="15" height="0.8" fill="#fff"/></svg><div class="t" style="left:153.48px;top:430.79px;font-size:15.6px;color:#d8d8d8;transform:scaleX(0.9620);transform-origin:0 0;">ТОП-отчеты по пользователям</div><svg class="a" style="left:129.1px;top:458.0px;" width="9" height="11" viewBox="0 0 9 11"><path d="M1.5 1.2 L6.6 5.5 L1.5 9.8" fill="none" stroke="#d4d4d4" stroke-width="2.3"/></svg><svg class="a" style="left:152.5px;top:454.5px;" width="19" height="18" viewBox="0 0 20 20"><defs><linearGradient id="gfo" x1="0" y1="0" x2="0" y2="1"><stop offset="0" stop-color="#fbe7a0"/><stop offset="1" stop-color="#f5c842"/></linearGradient></defs>
<path d="M1 2 H7.5 L8.5 3 H19 V19 H1 Z" fill="#e8b030"/><rect x="1" y="4" width="18" height="15" fill="url(#gfo)"/><rect x="2.5" y="4.6" width="15" height="0.8" fill="#fff"/></svg><div class="t" style="left:177.61px;top:455.79px;font-size:15.6px;color:#d8d8d8;transform:scaleX(0.8467);transform-origin:0 0;">FTP</div><svg class="a" style="left:129.1px;top:483.0px;" width="9" height="11" viewBox="0 0 9 11"><path d="M1.5 1.2 L6.6 5.5 L1.5 9.8" fill="none" stroke="#d4d4d4" stroke-width="2.3"/></svg><svg class="a" style="left:152.5px;top:479.5px;" width="19" height="18" viewBox="0 0 20 20"><defs><linearGradient id="gfo" x1="0" y1="0" x2="0" y2="1"><stop offset="0" stop-color="#fbe7a0"/><stop offset="1" stop-color="#f5c842"/></linearGradient></defs>
<path d="M1 2 H7.5 L8.5 3 H19 V19 H1 Z" fill="#e8b030"/><rect x="1" y="4" width="18" height="15" fill="url(#gfo)"/><rect x="2.5" y="4.6" width="15" height="0.8" fill="#fff"/></svg><div class="t" style="left:178.49px;top:480.79px;font-size:15.6px;color:#d8d8d8;transform:scaleX(0.9614);transform-origin:0 0;">Web</div><svg class="a" style="left:129.1px;top:508.0px;" width="9" height="11" viewBox="0 0 9 11"><path d="M1.5 1.2 L6.6 5.5 L1.5 9.8" fill="none" stroke="#d4d4d4" stroke-width="2.3"/></svg><svg class="a" style="left:152.5px;top:504.5px;" width="19" height="18" viewBox="0 0 20 20"><defs><linearGradient id="gfo" x1="0" y1="0" x2="0" y2="1"><stop offset="0" stop-color="#fbe7a0"/><stop offset="1" stop-color="#f5c842"/></linearGradient></defs>
<path d="M1 2 H7.5 L8.5 3 H19 V19 H1 Z" fill="#e8b030"/><rect x="1" y="4" width="18" height="15" fill="url(#gfo)"/><rect x="2.5" y="4.6" width="15" height="0.8" fill="#fff"/></svg><div class="t" style="left:178.46px;top:505.79px;font-size:15.6px;color:#d8d8d8;transform:scaleX(0.9538);transform-origin:0 0;">Активность ПК</div><svg class="a" style="left:126.1px;top:534.0px;" width="12" height="9" viewBox="0 0 12 9"><path d="M1.2 1.5 L6 6.3 L10.8 1.5" fill="none" stroke="#d4d4d4" stroke-width="2.3"/></svg><svg class="a" style="left:152.5px;top:529.5px;" width="19" height="18" viewBox="0 0 20 20"><defs><linearGradient id="gfo" x1="0" y1="0" x2="0" y2="1"><stop offset="0" stop-color="#fbe7a0"/><stop offset="1" stop-color="#f5c842"/></linearGradient></defs>
<path d="M1 2 H7.5 L8.5 3 H19 V19 H1 Z" fill="#e8b030"/><rect x="1" y="4" width="18" height="15" fill="url(#gfo)"/><rect x="2.5" y="4.6" width="15" height="0.8" fill="#fff"/></svg><div class="t" style="left:177.48px;top:530.79px;font-size:15.6px;color:#d8d8d8;transform:scaleX(0.9418);transform-origin:0 0;">Буфер обмена</div><svg class="a" style="left:178px;top:554.5px;" width="19" height="19" viewBox="0 0 20 20"><path d="M2 14.5 V2.5 Q2 1 3.5 1 H16.5 Q18 1 18 2.5 V14.5" fill="none" stroke="#3a72b8" stroke-width="1.5"/>
<path d="M1.2 13.5 Q1.5 15.5 3.5 15.5 M18.8 13.5 Q18.5 15.5 16.5 15.5" fill="none" stroke="#3a72b8" stroke-width="1.3"/>
<rect x="4" y="17.2" width="12" height="1.8" fill="#3a72b8"/>
<rect x="4.6" y="8" width="2.6" height="7" fill="#7cc420"/><rect x="8.7" y="4.5" width="2.6" height="10.5" fill="#f26030"/><rect x="12.8" y="6" width="2.6" height="9" fill="#4aa8ee"/></svg><div class="t" style="left:757.69px;top:555.79px;font-size:15.6px;color:#d8d8d8;transform:scaleX(0.9637);transform-origin:0 0;">Список пользо...</div><div class="t" style="left:202.96px;top:555.79px;font-size:15.6px;color:#d8d8d8;transform:scaleX(0.9634);transform-origin:0 0;">Буфер обмена: количество заблокированных операций</div><svg class="a" style="left:178px;top:579.5px;" width="19" height="19" viewBox="0 0 20 20"><path d="M2 14.5 V2.5 Q2 1 3.5 1 H16.5 Q18 1 18 2.5 V14.5" fill="none" stroke="#3a72b8" stroke-width="1.5"/>
<path d="M1.2 13.5 Q1.5 15.5 3.5 15.5 M18.8 13.5 Q18.5 15.5 16.5 15.5" fill="none" stroke="#3a72b8" stroke-width="1.3"/>
<rect x="4" y="17.2" width="12" height="1.8" fill="#3a72b8"/>
<rect x="4.6" y="8" width="2.6" height="7" fill="#7cc420"/><rect x="8.7" y="4.5" width="2.6" height="10.5" fill="#f26030"/><rect x="12.8" y="6" width="2.6" height="9" fill="#4aa8ee"/></svg><div class="t" style="left:757.69px;top:580.79px;font-size:15.6px;color:#d8d8d8;transform:scaleX(0.9637);transform-origin:0 0;">Список пользо...</div><div class="t" style="left:202.96px;top:580.79px;font-size:15.6px;color:#d8d8d8;transform:scaleX(0.9596);transform-origin:0 0;">Буфер обмена: количество операций</div><svg class="a" style="left:129.1px;top:608.0px;" width="9" height="11" viewBox="0 0 9 11"><path d="M1.5 1.2 L6.6 5.5 L1.5 9.8" fill="none" stroke="#d4d4d4" stroke-width="2.3"/></svg><svg class="a" style="left:152.5px;top:604.5px;" width="19" height="18" viewBox="0 0 20 20"><defs><linearGradient id="gfo" x1="0" y1="0" x2="0" y2="1"><stop offset="0" stop-color="#fbe7a0"/><stop offset="1" stop-color="#f5c842"/></linearGradient></defs>
<path d="M1 2 H7.5 L8.5 3 H19 V19 H1 Z" fill="#e8b030"/><rect x="1" y="4" width="18" height="15" fill="url(#gfo)"/><rect x="2.5" y="4.6" width="15" height="0.8" fill="#fff"/></svg><div class="t" style="left:177.43px;top:605.79px;font-size:15.6px;color:#d8d8d8;transform:scaleX(0.9825);transform-origin:0 0;">Кейлогер</div><svg class="a" style="left:129.1px;top:633.0px;" width="9" height="11" viewBox="0 0 9 11"><path d="M1.5 1.2 L6.6 5.5 L1.5 9.8" fill="none" stroke="#d4d4d4" stroke-width="2.3"/></svg><svg class="a" style="left:152.5px;top:629.5px;" width="19" height="18" viewBox="0 0 20 20"><defs><linearGradient id="gfo" x1="0" y1="0" x2="0" y2="1"><stop offset="0" stop-color="#fbe7a0"/><stop offset="1" stop-color="#f5c842"/></linearGradient></defs>
<path d="M1 2 H7.5 L8.5 3 H19 V19 H1 Z" fill="#e8b030"/><rect x="1" y="4" width="18" height="15" fill="url(#gfo)"/><rect x="2.5" y="4.6" width="15" height="0.8" fill="#fff"/></svg><div class="t" style="left:177.44px;top:630.79px;font-size:15.6px;color:#d8d8d8;transform:scaleX(0.9776);transform-origin:0 0;">Мессенджеры</div><svg class="a" style="left:129.1px;top:658.0px;" width="9" height="11" viewBox="0 0 9 11"><path d="M1.5 1.2 L6.6 5.5 L1.5 9.8" fill="none" stroke="#d4d4d4" stroke-width="2.3"/></svg><svg class="a" style="left:152.5px;top:654.5px;" width="19" height="18" viewBox="0 0 20 20"><defs><linearGradient id="gfo" x1="0" y1="0" x2="0" y2="1"><stop offset="0" stop-color="#fbe7a0"/><stop offset="1" stop-color="#f5c842"/></linearGradient></defs>
<path d="M1 2 H7.5 L8.5 3 H19 V19 H1 Z" fill="#e8b030"/><rect x="1" y="4" width="18" height="15" fill="url(#gfo)"/><rect x="2.5" y="4.6" width="15" height="0.8" fill="#fff"/></svg><div class="t" style="left:177.46px;top:655.79px;font-size:15.6px;color:#d8d8d8;transform:scaleX(0.9760);transform-origin:0 0;">Политики безопасности</div><svg class="a" style="left:129.1px;top:683.0px;" width="9" height="11" viewBox="0 0 9 11"><path d="M1.5 1.2 L6.6 5.5 L1.5 9.8" fill="none" stroke="#d4d4d4" stroke-width="2.3"/></svg><svg class="a" style="left:152.5px;top:679.5px;" width="19" height="18" viewBox="0 0 20 20"><defs><linearGradient id="gfo" x1="0" y1="0" x2="0" y2="1"><stop offset="0" stop-color="#fbe7a0"/><stop offset="1" stop-color="#f5c842"/></linearGradient></defs>
<path d="M1 2 H7.5 L8.5 3 H19 V19 H1 Z" fill="#e8b030"/><rect x="1" y="4" width="18" height="15" fill="url(#gfo)"/><rect x="2.5" y="4.6" width="15" height="0.8" fill="#fff"/></svg><div class="t" style="left:177.45px;top:680.79px;font-size:15.6px;color:#d8d8d8;transform:scaleX(0.9828);transform-origin:0 0;">Почта</div><svg class="a" style="left:129.1px;top:708.0px;" width="9" height="11" viewBox="0 0 9 11"><path d="M1.5 1.2 L6.6 5.5 L1.5 9.8" fill="none" stroke="#d4d4d4" stroke-width="2.3"/></svg><svg class="a" style="left:152.5px;top:704.5px;" width="19" height="18" viewBox="0 0 20 20"><defs><linearGradient id="gfo" x1="0" y1="0" x2="0" y2="1"><stop offset="0" stop-color="#fbe7a0"/><stop offset="1" stop-color="#f5c842"/></linearGradient></defs>
<path d="M1 2 H7.5 L8.5 3 H19 V19 H1 Z" fill="#e8b030"/><rect x="1" y="4" width="18" height="15" fill="url(#gfo)"/><rect x="2.5" y="4.6" width="15" height="0.8" fill="#fff"/></svg><div class="t" style="left:177.43px;top:705.79px;font-size:15.6px;color:#d8d8d8;transform:scaleX(0.9933);transform-origin:0 0;">Принтеры</div><svg class="a" style="left:129.1px;top:733.0px;" width="9" height="11" viewBox="0 0 9 11"><path d="M1.5 1.2 L6.6 5.5 L1.5 9.8" fill="none" stroke="#d4d4d4" stroke-width="2.3"/></svg><svg class="a" style="left:152.5px;top:729.5px;" width="19" height="18" viewBox="0 0 20 20"><defs><linearGradient id="gfo" x1="0" y1="0" x2="0" y2="1"><stop offset="0" stop-color="#fbe7a0"/><stop offset="1" stop-color="#f5c842"/></linearGradient></defs>
<path d="M1 2 H7.5 L8.5 3 H19 V19 H1 Z" fill="#e8b030"/><rect x="1" y="4" width="18" height="15" fill="url(#gfo)"/><rect x="2.5" y="4.6" width="15" height="0.8" fill="#fff"/></svg><div class="t" style="left:177.49px;top:730.79px;font-size:15.6px;color:#d8d8d8;transform:scaleX(0.9362);transform-origin:0 0;">Расследования</div><svg class="a" style="left:129.1px;top:758.0px;" width="9" height="11" viewBox="0 0 9 11"><path d="M1.5 1.2 L6.6 5.5 L1.5 9.8" fill="none" stroke="#d4d4d4" stroke-width="2.3"/></svg><svg class="a" style="left:152.5px;top:754.5px;" width="19" height="18" viewBox="0 0 20 20"><defs><linearGradient id="gfo" x1="0" y1="0" x2="0" y2="1"><stop offset="0" stop-color="#fbe7a0"/><stop offset="1" stop-color="#f5c842"/></linearGradient></defs>
<path d="M1 2 H7.5 L8.5 3 H19 V19 H1 Z" fill="#e8b030"/><rect x="1" y="4" width="18" height="15" fill="url(#gfo)"/><rect x="2.5" y="4.6" width="15" height="0.8" fill="#fff"/></svg><div class="t" style="left:178.00px;top:755.79px;font-size:15.6px;color:#d8d8d8;transform:scaleX(0.9411);transform-origin:0 0;">Сетевые ресурсы</div><svg class="a" style="left:129.1px;top:783.0px;" width="9" height="11" viewBox="0 0 9 11"><path d="M1.5 1.2 L6.6 5.5 L1.5 9.8" fill="none" stroke="#d4d4d4" stroke-width="2.3"/></svg><svg class="a" style="left:152.5px;top:779.5px;" width="19" height="18" viewBox="0 0 20 20"><defs><linearGradient id="gfo" x1="0" y1="0" x2="0" y2="1"><stop offset="0" stop-color="#fbe7a0"/><stop offset="1" stop-color="#f5c842"/></linearGradient></defs>
<path d="M1 2 H7.5 L8.5 3 H19 V19 H1 Z" fill="#e8b030"/><rect x="1" y="4" width="18" height="15" fill="url(#gfo)"/><rect x="2.5" y="4.6" width="15" height="0.8" fill="#fff"/></svg><div class="t" style="left:177.68px;top:780.79px;font-size:15.6px;color:#d8d8d8;transform:scaleX(0.9436);transform-origin:0 0;">Файлы с устройств</div><svg class="a" style="left:129.1px;top:805.9px;" width="9" height="11" viewBox="0 0 9 11"><path d="M1.5 1.2 L6.6 5.5 L1.5 9.8" fill="none" stroke="#d4d4d4" stroke-width="2.3"/></svg><svg class="a" style="left:152.5px;top:802.4px;" width="19" height="18" viewBox="0 0 20 20"><defs><linearGradient id="gfo" x1="0" y1="0" x2="0" y2="1"><stop offset="0" stop-color="#fbe7a0"/><stop offset="1" stop-color="#f5c842"/></linearGradient></defs>
<path d="M1 2 H7.5 L8.5 3 H19 V19 H1 Z" fill="#e8b030"/><rect x="1" y="4" width="18" height="15" fill="url(#gfo)"/><rect x="2.5" y="4.6" width="15" height="0.8" fill="#fff"/></svg><div class="t" style="left:177.59px;top:803.69px;font-size:15.6px;color:#d8d8d8;transform:scaleX(0.9336);transform-origin:0 0;">Эффективность работы</div><div class="a" style="left:71px;top:827px;width:809px;height:1px;background:#383838;"></div><div class="a" style="left:83.5px;top:545.7px;width:649.0px;height:35.0px;border:4px solid #f00000;box-sizing:border-box;border-radius:3px;"></div><div class="a" style="left:908px;top:116px;width:980px;height:894px;background:#1e1e1e;border:1px solid #474747;box-sizing:border-box;border-radius:6px;"></div><div class="a" style="left:909px;top:117px;width:978px;height:62px;background:#202020;border-radius:5px 5px 0 0;"></div><div class="a" style="left:909px;top:179px;width:978px;height:6px;background:linear-gradient(#131313,rgba(30,30,30,0));"></div><svg class="a" style="left:930px;top:130px;" width="36" height="36" viewBox="0 0 36 36"><rect x="1" y="1" width="34" height="30" rx="3" fill="none" stroke="#3a78c0" stroke-width="1.6"/>
<rect x="1" y="26" width="34" height="6" fill="#202020"/>
<path d="M1 25 V29 Q1 31 3 31 M35 25 V29 Q35 31 33 31" fill="none" stroke="#3a78c0" stroke-width="1.6"/>
<rect x="5" y="33.5" width="26" height="1.8" fill="#3a78c0"/>
<rect x="6.5" y="17.5" width="6.5" height="13.5" fill="#78c020"/><rect x="15" y="7.5" width="6.5" height="23.5" fill="#f86a3a"/><rect x="23.5" y="13.5" width="6.5" height="17.5" fill="#4aaaf0"/></svg><div class="t" style="left:981.99px;top:138.04px;font-size:25px;color:#a9a9a9;font-weight:400;-webkit-text-stroke:0.5px #a9a9a9;transform:scaleX(1.0246);transform-origin:0 0;">Буфер обмена: количество операций</div><svg class="a" style="left:1444px;top:144px;" width="13" height="8" viewBox="0 0 13 8"><path d="M1 7 L6.5 1.5 L12 7" fill="none" stroke="#c8c8c8" stroke-width="2"/></svg><svg class="a" style="left:1616px;top:138px;" width="17" height="18" viewBox="0 0 20 20"><circle cx="10" cy="5" r="4.5" fill="#f2f2f2"/><path d="M1 19.5 C1 12.5 4 10.5 10 10.5 C16 10.5 19 12.5 19 19.5 Z" fill="#f2f2f2"/></svg><div class="t" style="left:1635.56px;top:139.26px;font-size:16px;color:#c8c8c8;transform:scaleX(0.9372);transform-origin:0 0;">4</div><svg class="a" style="left:1654px;top:138px;" width="18" height="18" viewBox="0 0 20 20"><circle cx="10" cy="10" r="9.5" fill="#f2f2f2"/><path d="M10 4 V10.5 H13.5" fill="none" stroke="#1e1e1e" stroke-width="1.1"/></svg><div class="t" style="left:1677.25px;top:139.26px;font-size:16px;color:#c8c8c8;transform:scaleX(0.9015);transform-origin:0 0;">31.12.2025 - 04.01.2026</div><svg class="a" style="left:1849px;top:137px;" width="22" height="22" viewBox="0 0 20 20"><polygon points="7.87,3.12 8.36,0.14 11.64,0.14 12.13,3.12 13.60,3.76 14.89,4.72 17.72,3.65 19.36,6.49 17.02,8.40 17.20,10.00 17.02,11.60 19.36,13.51 17.72,16.35 14.89,15.28 13.60,16.24 12.13,16.88 11.64,19.86 8.36,19.86 7.87,16.88 6.40,16.24 5.11,15.28 2.28,16.35 0.64,13.51 2.98,11.60 2.80,10.00 2.98,8.40 0.64,6.49 2.28,3.65 5.11,4.72 6.40,3.76" fill="#c8ccd2"/><circle cx="10" cy="10" r="3.2" fill="#1e1e1e"/></svg><div class="a" style="left:1105px;top:194px;width:106px;height:36px;background:#2e2e2e;border:1px solid #383838;box-sizing:border-box;border-radius:6px 6px 0 0;border-bottom:none;"></div><svg class="a" style="left:908px;top:193px;" width="196" height="38" viewBox="0 0 196 38"><path d="M0.5 37.5 V0.5 H189 Q194.5 0.5 194.5 6 V37.5" fill="none" stroke="#3c3c3c" stroke-width="1"/></svg><div class="a" style="left:1102px;top:229px;width:786px;height:1px;background:#3c3c3c;"></div><div class="t" style="left:934.40px;top:206.06px;font-size:16px;color:#e2e2e2;transform:scaleX(1.1048);transform-origin:0 0;">Общие настройки</div><div class="t" style="left:1129.70px;top:206.06px;font-size:16px;color:#dadada;transform:scaleX(1.1089);transform-origin:0 0;">Фильтр</div><div class="t" style="left:946.56px;top:253.32px;font-size:19px;color:#dedede;font-weight:400;-webkit-text-stroke:0.5px #dedede;transform:scaleX(1.0706);transform-origin:0 0;">Параметры отчета</div><div class="a" style="left:1135px;top:261px;width:686px;height:1px;background:#383838;"></div><svg class="a" style="left:1832px;top:250px;" width="23" height="23" viewBox="0 0 20 20"><polygon points="7.87,3.12 8.36,0.14 11.64,0.14 12.13,3.12 13.60,3.76 14.89,4.72 17.72,3.65 19.36,6.49 17.02,8.40 17.20,10.00 17.02,11.60 19.36,13.51 17.72,16.35 14.89,15.28 13.60,16.24 12.13,16.88 11.64,19.86 8.36,19.86 7.87,16.88 6.40,16.24 5.11,15.28 2.28,16.35 0.64,13.51 2.98,11.60 2.80,10.00 2.98,8.40 0.64,6.49 2.28,3.65 5.11,4.72 6.40,3.76" fill="#c8ccd2"/><circle cx="10" cy="10" r="3.2" fill="#1e1e1e"/></svg><svg class="a" style="left:1851px;top:294px;" width="10" height="6" viewBox="0 0 10 6"><path d="M1 5 L5 1 L9 5" fill="none" stroke="#6a6a6a" stroke-width="1.3"/></svg><div class="a" style="left:1852px;top:303px;width:8px;height:167px;background:#333333;border-radius:4px;"></div><div class="a" style="left:1852px;top:303px;width:8px;height:121px;background:#5a5a5a;border-radius:4px;"></div><svg class="a" style="left:1851px;top:473px;" width="10" height="6" viewBox="0 0 10 6"><path d="M1 1 L5 5 L9 1" fill="none" stroke="#6a6a6a" stroke-width="1.3"/></svg><div class="t" style="left:949.27px;top:323.59px;font-size:15.6px;color:#e2e2e2;font-weight:700;transform:scaleX(0.9145);transform-origin:0 0;">Представление отчета:</div><div class="a" style="left:1121px;top:312px;width:152px;height:38px;background:#222222;border:1px solid #484848;box-sizing:border-box;border-radius:5px;"></div><div class="a" style="left:1158px;top:313px;width:39px;height:36px;background:#3c3c3c;"></div><div class="a" style="left:1158px;top:313px;width:1px;height:36px;background:#484848;"></div><div class="a" style="left:1196px;top:313px;width:1px;height:36px;background:#484848;"></div><div class="a" style="left:1234px;top:313px;width:1px;height:36px;background:#484848;"></div><svg class="a" style="left:1130px;top:322px;" width="18" height="18" viewBox="0 0 20 20"><path d="M1 1 V19 H19" fill="none" stroke="#8a8a8a" stroke-width="1.2"/><rect x="4" y="5" width="3.5" height="12.5" fill="#8a8a8a"/><rect x="9" y="10" width="3.5" height="7.5" fill="#8a8a8a"/><rect x="14.5" y="2.5" width="3.5" height="15" fill="#8a8a8a"/></svg><svg class="a" style="left:1168px;top:322px;" width="18" height="18" viewBox="0 0 20 20"><path d="M1.2 0.5 V19 H19.5" fill="none" stroke="#4a88d8" stroke-width="1.6"/><rect x="3.5" y="2" width="6.5" height="3.5" fill="#4a88d8"/><rect x="3.5" y="7.5" width="10.5" height="3.5" fill="#4a88d8"/><rect x="3.5" y="13" width="15" height="3.5" fill="#4a88d8"/></svg><svg class="a" style="left:1206px;top:322px;" width="18" height="18" viewBox="0 0 20 20"><circle cx="10" cy="10" r="9.5" fill="#8a8a8a"/><path d="M10 10 V1.5 A8.5 8.5 0 0 1 18.5 10 Z" fill="#222"/></svg><svg class="a" style="left:1244px;top:322px;" width="18" height="18" viewBox="0 0 20 20"><rect x="0.5" y="0.5" width="19" height="19" fill="#8a8a8a"/><rect x="2.5" y="6" width="3" height="5" fill="#222"/><rect x="7.5" y="6" width="10" height="5" fill="#222"/><rect x="2.5" y="13" width="3" height="4.5" fill="#222"/><rect x="7.5" y="13" width="10" height="4.5" fill="#222"/></svg><div class="t" style="left:949.63px;top:373.59px;font-size:15.6px;color:#e2e2e2;font-weight:700;transform:scaleX(0.8951);transform-origin:0 0;">Число результатов:</div><div class="a" style="left:1121px;top:362px;width:125px;height:38px;background:#1c1c1c;border:1px solid #484848;box-sizing:border-box;border-radius:5px;"></div><div class="t" style="left:1133.96px;top:373.09px;font-size:15.6px;color:#e0e0e0;transform:scaleX(1.0354);transform-origin:0 0;">20</div><div class="t" style="left:1271.72px;top:373.59px;font-size:15.6px;color:#e2e2e2;font-weight:700;transform:scaleX(0.9164);transform-origin:0 0;">Тип сортировки:</div><div class="a" style="left:1393px;top:362px;width:82px;height:38px;background:#222222;border:1px solid #484848;box-sizing:border-box;border-radius:5px;"></div><div class="a" style="left:1433px;top:363px;width:41px;height:36px;background:#3c3c3c;border-radius:0 4px 4px 0;"></div><div class="a" style="left:1433px;top:363px;width:1px;height:36px;background:#484848;"></div><svg class="a" style="left:1400px;top:372px;" width="26" height="19" viewBox="0 0 25 19"><rect x="3.3" y="1" width="3.4" height="13" fill="#6cc000"/><path d="M0 12 H10 L5 19 Z" fill="#6cc000"/>
<rect x="11" y="1" width="5" height="4" fill="#4a80c8"/><rect x="11" y="7.5" width="9" height="4" fill="#4a80c8"/><rect x="11" y="14" width="14" height="4" fill="#4a80c8"/></svg><svg class="a" style="left:1441px;top:372px;" width="26" height="19" viewBox="0 0 25 19"><rect x="3.3" y="1" width="3.4" height="13" fill="#6cc000"/><path d="M0 12 H10 L5 19 Z" fill="#6cc000"/>
<rect x="11" y="1" width="14" height="4" fill="#4a80c8"/><rect x="11" y="7.5" width="9" height="4" fill="#4a80c8"/><rect x="11" y="14" width="5" height="4" fill="#4a80c8"/></svg><div class="a" style="left:1122px;top:413px;width:18px;height:18px;border:2px solid #8a8a8a;box-sizing:border-box;border-radius:2px;"></div><div class="t" style="left:1146.43px;top:413.79px;font-size:15.6px;color:#e0e0e0;transform:scaleX(0.9607);transform-origin:0 0;">Отображать не попавшие в топ результаты в группе «Другие»</div><div class="t" style="left:949.27px;top:455.59px;font-size:15.6px;color:#e2e2e2;font-weight:700;transform:scaleX(0.9155);transform-origin:0 0;">Показатель отчета:</div><div class="a" style="left:1121px;top:444px;width:674px;height:38px;background:#1c1c1c;border:1px solid #484848;box-sizing:border-box;border-radius:5px;"></div><svg class="a" style="left:1130px;top:453px;" width="19" height="20" viewBox="0 0 20 20"><rect x="1" y="2.5" width="14" height="17" rx="1" fill="#f0a830"/><rect x="3" y="4.5" width="10" height="13.5" fill="#f4f8fc"/>
<path d="M5 1 H11 L12 4.5 H4 Z" fill="#3a78b8"/><path d="M4.5 8 H11.5 M4.5 10.5 H11.5 M4.5 13 H9" stroke="#9ac0e0" stroke-width="1"/>
<circle cx="14.5" cy="15.5" r="4.5" fill="#e81020"/><path d="M12.3 13.3 L16.7 17.7" stroke="#fff" stroke-width="1.6"/></svg><div class="a" style="left:1159px;top:453px;width:2px;height:20px;background:#e0e0e0;"></div><div class="t" style="left:1160.16px;top:456.29px;font-size:15.6px;color:#e0e0e0;transform:scaleX(0.9614);transform-origin:0 0;">Буфер обмена: количество заблокированных операций</div><svg class="a" style="left:1775px;top:456px;" width="14" height="14" viewBox="0 0 14 14"><path d="M1 1 L13 13 M13 1 L1 13" stroke="#c8c8c8" stroke-width="1.6"/></svg><div class="a" style="left:1801px;top:444px;width:38px;height:38px;background:#222222;border:1px solid #484848;box-sizing:border-box;border-radius:5px;"></div><svg class="a" style="left:1811px;top:453px;" width="18" height="18" viewBox="0 0 20 20"><g fill="#3a78c0"><rect x="1" y="2" width="2" height="1.6"/><rect x="5" y="2" width="14" height="1.6"/><rect x="1" y="6" width="2" height="1.6"/><rect x="5" y="6" width="14" height="1.6"/><rect x="1" y="10" width="2" height="1.6"/><rect x="5" y="10" width="14" height="1.6"/><rect x="1" y="14" width="2" height="1.6"/><rect x="5" y="14" width="14" height="1.6"/><rect x="1" y="18" width="2" height="1.6"/><rect x="5" y="18" width="14" height="1.6"/></g></svg><div class="a" style="left:947px;top:496px;width:904px;height:1px;background:#383838;"></div><div class="a" style="left:1554px;top:509px;width:165px;height:38px;background:#232323;border:1px solid #484848;box-sizing:border-box;border-radius:5px;"></div><div class="a" style="left:1690px;top:510px;width:1px;height:36px;background:#484848;"></div><div class="t" style="left:1565.97px;top:520.59px;font-size:15.6px;color:#e0e0e0;transform:scaleX(0.9632);transform-origin:0 0;">Построить отчет</div><svg class="a" style="left:1699px;top:525px;" width="11" height="6" viewBox="0 0 11 6"><path d="M0.5 0.5 H10.5 L5.5 5.5 Z" fill="#a8a8a8"/></svg><div class="a" style="left:1729px;top:509px;width:125px;height:38px;background:#232323;border:1px solid #484848;box-sizing:border-box;border-radius:5px;"></div><div class="t" style="left:1765.25px;top:520.59px;font-size:15.6px;color:#e0e0e0;transform:scaleX(0.9332);transform-origin:0 0;">Отмена</div><div class="a" style="left:909px;top:560px;width:978px;height:1px;background:#383838;"></div><div class="t" style="left:934.51px;top:592.57px;font-size:20px;color:#7c7c7c;font-weight:400;-webkit-text-stroke:0.5px #7c7c7c;transform:scaleX(1.0249);transform-origin:0 0;">Суммарный ТОП-отчет &quot;Буфер обмена: количество операций&quot;</div><div class="a" style="left:1542px;top:600px;width:320px;height:1px;background:#353535;"></div><div class="a" style="left:1221px;top:647px;width:641px;height:276px;background:#1e1e1e;border:1px solid #3a3a3a;box-sizing:border-box;border-radius:4px;"></div><div class="a" style="left:1222px;top:648px;width:62px;height:274px;background:#242424;"></div><div class="a" style="left:1346px;top:648px;width:63px;height:274px;background:#242424;"></div><div class="a" style="left:1471px;top:648px;width:62px;height:274px;background:#242424;"></div><div class="a" style="left:1596px;top:648px;width:62px;height:274px;background:#242424;"></div><div class="a" style="left:1721px;top:648px;width:62px;height:274px;background:#242424;"></div><div class="a" style="left:1846px;top:648px;width:15px;height:274px;background:#242424;"></div><div class="a" style="left:1222px;top:661px;width:611px;height:40px;background:#6a1b9a;border-radius:0 3px 3px 0;"></div><div class="t" style="left:1839.69px;top:674.30px;font-size:15px;color:#d8d8d8;transform:scaleX(1.0192);transform-origin:0 0;">35</div><div class="a" style="left:1222px;top:730px;width:541px;height:40px;background:#8e24aa;border-radius:0 3px 3px 0;"></div><div class="t" style="left:1769.69px;top:743.30px;font-size:15px;color:#d8d8d8;transform:scaleX(1.0205);transform-origin:0 0;">31</div><div class="a" style="left:1222px;top:799px;width:489px;height:40px;background:#ab47bc;border-radius:0 3px 3px 0;"></div><div class="t" style="left:1717.69px;top:812.30px;font-size:15px;color:#d8d8d8;transform:scaleX(1.0208);transform-origin:0 0;">28</div><div class="a" style="left:1222px;top:868px;width:401px;height:40px;background:#29b6f6;border-radius:0 3px 3px 0;"></div><div class="t" style="left:1629.69px;top:881.30px;font-size:15px;color:#d8d8d8;transform:scaleX(1.0208);transform-origin:0 0;">23</div><div class="a" style="left:934px;top:649px;width:262px;height:64px;background:#2a2a2a;border-radius:5px;"></div><div class="a" style="left:1196px;top:681px;width:26px;height:1px;background:#444444;"></div><svg class="a" style="left:944px;top:665px;" width="31" height="31" viewBox="0 0 31 31"><defs><clipPath id="av0"><rect x="0" y="0" width="31" height="31" rx="5"/></clipPath>
<radialGradient id="sk0" cx="0.5" cy="0.45" r="0.6"><stop offset="0" stop-color="#d8b098"/><stop offset="1" stop-color="#9a7060"/></radialGradient></defs>
<g clip-path="url(#av0)"><rect width="31" height="31" fill="#4a5a3a"/>
<path d="M0 31 V26 Q4 22 15.5 22 Q27 22 31 26 V31 Z" fill="#2a3a68"/>
<ellipse cx="15.5" cy="15" rx="8.3" ry="10.8" fill="url(#sk0)"/>
<path d="M8.5 21 Q9.5 27 15.5 27 Q21.5 27 22.5 21 Q21 23 15.5 23.5 Q10 23 8.5 21 Z" fill="none"/>
<path d="M7 13 Q6.5 3 15.5 3 Q24.5 3 24 13 Q22.5 7.5 15.5 7.5 Q8.5 7.5 7 13 Z" fill="#6a5038"/>
<ellipse cx="12.3" cy="14" rx="1.3" ry="0.8" fill="#5a4a48"/><ellipse cx="18.7" cy="14" rx="1.3" ry="0.8" fill="#5a4a48"/></g>
<rect x="0.5" y="0.5" width="30" height="30" rx="5" fill="none" stroke="#3a3a3a" stroke-width="1"/></svg><div class="t" style="left:983.93px;top:657.30px;font-size:15px;color:#e0e0e0;transform:scaleX(1.0119);transform-origin:0 0;">Волков Иван</div><div class="t" style="left:984.62px;top:675.60px;font-size:13px;color:#8a8a8a;transform:scaleX(0.9671);transform-origin:0 0;">Отдел продаж</div><div class="t" style="left:984.08px;top:692.80px;font-size:13px;color:#8a8a8a;transform:scaleX(0.9929);transform-origin:0 0;">Менеджер</div><div class="a" style="left:934px;top:718px;width:262px;height:64px;background:#2a2a2a;border-radius:5px;"></div><div class="a" style="left:1196px;top:750px;width:26px;height:1px;background:#444444;"></div><svg class="a" style="left:944px;top:734px;" width="31" height="31" viewBox="0 0 31 31"><defs><clipPath id="av1"><rect x="0" y="0" width="31" height="31" rx="5"/></clipPath>
<radialGradient id="sk1" cx="0.5" cy="0.45" r="0.6"><stop offset="0" stop-color="#c8a088"/><stop offset="1" stop-color="#9a7060"/></radialGradient></defs>
<g clip-path="url(#av1)"><rect width="31" height="31" fill="#8a8a86"/>
<path d="M0 31 V26 Q4 22 15.5 22 Q27 22 31 26 V31 Z" fill="#e8e8e8"/>
<ellipse cx="15.5" cy="15" rx="8.3" ry="10.8" fill="url(#sk1)"/>
<path d="M8.5 21 Q9.5 27 15.5 27 Q21.5 27 22.5 21 Q21 23 15.5 23.5 Q10 23 8.5 21 Z" fill="#8a6a58"/>
<path d="M7 13 Q6.5 3 15.5 3 Q24.5 3 24 13 Q22.5 7.5 15.5 7.5 Q8.5 7.5 7 13 Z" fill="#4a3a2a"/>
<ellipse cx="12.3" cy="14" rx="1.3" ry="0.8" fill="#5a4a48"/><ellipse cx="18.7" cy="14" rx="1.3" ry="0.8" fill="#5a4a48"/></g>
<rect x="0.5" y="0.5" width="30" height="30" rx="5" fill="none" stroke="#3a3a3a" stroke-width="1"/></svg><div class="t" style="left:984.58px;top:726.30px;font-size:15px;color:#e0e0e0;transform:scaleX(0.9669);transform-origin:0 0;">Халтурин Вадим</div><div class="t" style="left:984.92px;top:744.60px;font-size:13px;color:#8a8a8a;transform:scaleX(0.9679);transform-origin:0 0;">Технический отдел</div><div class="t" style="left:984.60px;top:761.80px;font-size:13px;color:#8a8a8a;transform:scaleX(0.9492);transform-origin:0 0;">Системный администратор</div><div class="a" style="left:934px;top:787px;width:262px;height:64px;background:#2a2a2a;border-radius:5px;"></div><div class="a" style="left:1196px;top:819px;width:26px;height:1px;background:#444444;"></div><svg class="a" style="left:944px;top:803px;" width="31" height="31" viewBox="0 0 31 31"><defs><clipPath id="av2"><rect x="0" y="0" width="31" height="31" rx="5"/></clipPath>
<radialGradient id="sk2" cx="0.5" cy="0.45" r="0.6"><stop offset="0" stop-color="#d0a890"/><stop offset="1" stop-color="#9a7060"/></radialGradient></defs>
<g clip-path="url(#av2)"><rect width="31" height="31" fill="#7c7c7c"/>
<path d="M0 31 V26 Q4 22 15.5 22 Q27 22 31 26 V31 Z" fill="#8ab0e0"/>
<ellipse cx="15.5" cy="15" rx="8.3" ry="10.8" fill="url(#sk2)"/>
<path d="M8.5 21 Q9.5 27 15.5 27 Q21.5 27 22.5 21 Q21 23 15.5 23.5 Q10 23 8.5 21 Z" fill="#3a2e28"/>
<path d="M7 13 Q6.5 3 15.5 3 Q24.5 3 24 13 Q22.5 7.5 15.5 7.5 Q8.5 7.5 7 13 Z" fill="#2a221c"/>
<ellipse cx="12.3" cy="14" rx="1.3" ry="0.8" fill="#5a4a48"/><ellipse cx="18.7" cy="14" rx="1.3" ry="0.8" fill="#5a4a48"/></g>
<rect x="0.5" y="0.5" width="30" height="30" rx="5" fill="none" stroke="#3a3a3a" stroke-width="1"/></svg><div class="t" style="left:984.87px;top:795.30px;font-size:15px;color:#e0e0e0;transform:scaleX(1.0041);transform-origin:0 0;">Тихомиров Сергей</div><div class="t" style="left:984.62px;top:813.60px;font-size:13px;color:#8a8a8a;transform:scaleX(0.9671);transform-origin:0 0;">Отдел продаж</div><div class="t" style="left:984.08px;top:830.80px;font-size:13px;color:#8a8a8a;transform:scaleX(0.9929);transform-origin:0 0;">Менеджер</div><div class="a" style="left:934px;top:856px;width:262px;height:64px;background:#2a2a2a;border-radius:5px;"></div><div class="a" style="left:1196px;top:888px;width:26px;height:1px;background:#444444;"></div><svg class="a" style="left:944px;top:872px;" width="31" height="31" viewBox="0 0 31 31"><defs><clipPath id="av3"><rect x="0" y="0" width="31" height="31" rx="5"/></clipPath>
<radialGradient id="sk3" cx="0.5" cy="0.45" r="0.6"><stop offset="0" stop-color="#e0b8a0"/><stop offset="1" stop-color="#9a7060"/></radialGradient></defs>
<g clip-path="url(#av3)"><rect width="31" height="31" fill="#6a8cb0"/>
<path d="M0 31 V26 Q4 22 15.5 22 Q27 22 31 26 V31 Z" fill="#e8eef4"/>
<ellipse cx="15.5" cy="15" rx="8.3" ry="10.8" fill="url(#sk3)"/>
<path d="M8.5 21 Q9.5 27 15.5 27 Q21.5 27 22.5 21 Q21 23 15.5 23.5 Q10 23 8.5 21 Z" fill="none"/>
<path d="M7 13 Q6.5 3 15.5 3 Q24.5 3 24 13 Q22.5 7.5 15.5 7.5 Q8.5 7.5 7 13 Z" fill="#4a3a30"/>
<ellipse cx="12.3" cy="14" rx="1.3" ry="0.8" fill="#5a4a48"/><ellipse cx="18.7" cy="14" rx="1.3" ry="0.8" fill="#5a4a48"/></g>
<rect x="0.5" y="0.5" width="30" height="30" rx="5" fill="none" stroke="#3a3a3a" stroke-width="1"/></svg><div class="t" style="left:983.95px;top:864.30px;font-size:15px;color:#e0e0e0;transform:scaleX(0.9969);transform-origin:0 0;">Иванов Александр</div><div class="t" style="left:984.62px;top:882.60px;font-size:13px;color:#8a8a8a;transform:scaleX(0.9671);transform-origin:0 0;">Отдел продаж</div><div class="t" style="left:984.08px;top:899.80px;font-size:13px;color:#8a8a8a;transform:scaleX(0.9929);transform-origin:0 0;">Менеджер</div>
</body></html>
